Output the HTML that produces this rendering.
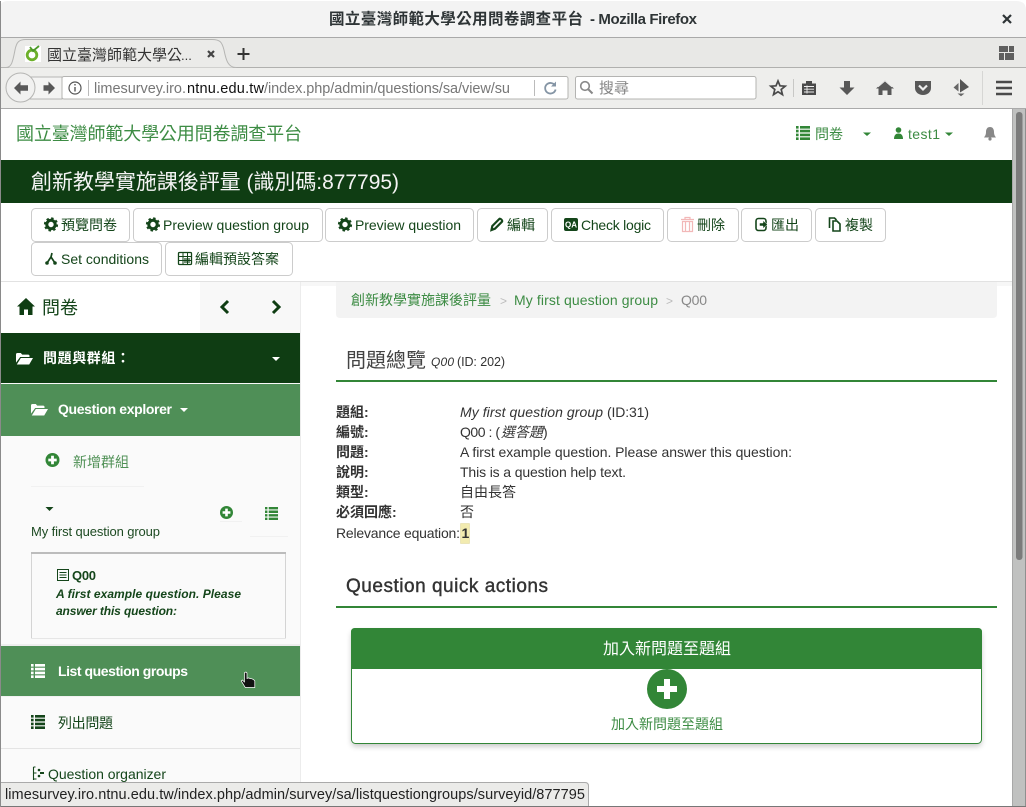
<!DOCTYPE html>
<html lang="zh-Hant"><head><meta charset="utf-8"><title>國立臺灣師範大學公用問卷調查平台</title>
<style>
html,body{margin:0;padding:0;width:1026px;height:807px;overflow:hidden;background:#fff}
svg{display:block}
text{font-family:"Liberation Sans","WenQuanYi Zen Hei","Noto Sans CJK TC",sans-serif;white-space:pre}
.b{font-size:14px;fill:#14451a}
.d{font-size:14px;fill:#333}
.w{fill:#fff;font-weight:700;font-size:14px}
.l{font-weight:700;font-size:14px;fill:#333}
.g{font-size:14px;fill:#3d8c44}
.btn{fill:#fff;stroke:#ccc}
.tb{fill:#555}
</style></head><body>
<svg xmlns="http://www.w3.org/2000/svg" width="1026" height="807" viewBox="0 0 1026 807">
<defs>
<g id="gear"><circle r="4.2" fill="none" stroke="#14451a" stroke-width="3"/><circle r="6" fill="none" stroke="#14451a" stroke-width="2.2" stroke-dasharray="2.4 2.3"/></g>
<g id="list"><path d="M0 0h2.6v2.6H0zM4 0h10v2.6H4zM0 3.8h2.6v2.6H0zM4 3.8h10v2.6H4zM0 7.6h2.6v2.6H0zM4 7.6h10v2.6H4zM0 11.4h2.6v2.6H0zM4 11.4h10v2.6H4z"/></g>
<g id="folder"><path d="M0 3.5C0 2.5.6 2 1.4 2h3.4l1.4 1.6h6c.8 0 1.3.5 1.3 1.2V6H4.2L0 11.6zM4.8 7H17l-3.8 6.5H.8z"/></g>
<g id="pc"><circle r="7" fill="currentColor"/><path d="M-1.4-4.2h2.8v2.8h2.8v2.8H1.400v2.800h-2.800V1.400h-2.800v-2.800h2.800z" fill="#fff"/></g>
</defs>

<!-- title bar -->
<rect width="1026" height="807" fill="#fff"/>
<path d="M0 37V8Q0 1 8 1H1016Q1026 1 1026 10V37z" fill="#f3f3f3"/>
<rect y="37" width="1026" height="1" fill="#a9a9a9"/>
<text x="329" y="24" font-size="15.500" font-weight="700" fill="#2e3436" textLength="254">國立臺灣師範大學公用問卷調查平台</text>
<text x="590" y="24" font-size="15" font-weight="700" fill="#2e3436" textLength="107">- Mozilla Firefox</text>
<path d="M1003 15l8 8M1011 15l-8 8" stroke="#2e3436" stroke-width="2.200"/>

<!-- tab bar -->
<rect y="38" width="1026" height="30" fill="#e8e8e6"/>
<rect y="67" width="1026" height="1" fill="#b0b0ae"/>
<path d="M0 67.500H6C12 67.500 13 60 15 50 16.500 42 19 39.500 26 39.500H212C220 39.500 222 42 224 50 226 60 228 67.500 236 67.500V68H0z" fill="#ebebe9" stroke="#b5b5b3"/>
<rect x="25" y="46" width="16" height="16" fill="#fff"/>
<circle cx="32" cy="55" r="4.800" fill="none" stroke="#6db02a" stroke-width="2.800"/>
<path d="M30 47l3 4 6-5" fill="none" stroke="#4c9a2a" stroke-width="1.800"/>
<text x="47" y="60" font-size="15" fill="#333" textLength="135">國立臺灣師範大學公</text>
<text x="181" y="60" font-size="13" fill="#333">...</text>
<path d="M208 51l6 6M214 51l-6 6" stroke="#444" stroke-width="2.200"/>
<path d="M243.500 48v12M237.500 54h12" stroke="#333" stroke-width="2"/>
<path d="M999 46h9v6h-9zM1009 46h5v6h-5zM999 53h5v7h-5zM1005 53h9v7h-9z" fill="#5f5f5f"/>

<!-- nav bar -->
<rect y="68" width="1026" height="40" fill="#eeeeec"/>
<rect y="108" width="1026" height="1" fill="#aaa"/>
<path d="M30 77H62V99H30z" fill="#f4f4f3" stroke="#b6b6b4"/>
<circle cx="20.500" cy="87.500" r="14.500" fill="#f1f1f0" stroke="#b4b4b2"/>
<path d="M14 88l6.500-6.500v3.800h7.500v5.400h-7.500v3.800z" fill="#585858"/>
<path d="M55 88l-6.500-6.500v3.800h-5v5.400h5v3.800z" fill="#585858"/>
<rect x="62" y="76.500" width="506" height="22.500" rx="2" fill="#fff" stroke="#b4b4b2"/>
<circle cx="75" cy="88" r="6" fill="none" stroke="#555" stroke-width="1.200"/>
<path d="M75 87v4.500M75 84v1.500" stroke="#555" stroke-width="1.400"/>
<rect x="88" y="80" width="1" height="16" fill="#bbb"/>
<svg x="94" y="76" width="416" height="24"><text x="0" y="17" font-size="14.500" fill="#777" textLength="92">limesurvey.iro.</text><text x="93" y="17" font-size="14.500" fill="#111" textLength="77">ntnu.edu.tw</text><text x="170" y="17" font-size="14.500" fill="#777" textLength="246">/index.php/admin/questions/sa/view/su</text></svg>
<rect x="534" y="80" width="1" height="16" fill="#bbb"/>
<path d="M555 85.500a5.300 5.300 0 1 0 .6 4" fill="none" stroke="#8595a5" stroke-width="1.800"/><path d="M556 81.500v5h-5z" fill="#8595a5"/>
<rect x="575.500" y="76.500" width="180.500" height="22.500" rx="2" fill="#fff" stroke="#b4b4b2"/>
<circle cx="585" cy="86" r="4.300" fill="none" stroke="#888" stroke-width="1.600"/><path d="M588 89l4.500 4.500" stroke="#888" stroke-width="2"/>
<text x="599" y="93" font-size="15" fill="#858585">搜尋</text>
<path d="M778 81l2 4.800 5.200.4-4 3.300 1.300 5.100-4.500-2.800-4.500 2.800 1.300-5.100-4-3.300 5.200-.4z" fill="none" stroke="#4a4a4a" stroke-width="1.700"/>
<rect x="793" y="79" width="1" height="18" fill="#c8c8c6"/>
<path d="M802 83.500h4v-2.500h6v2.500h4v11.500h-14z" fill="#4a4a4a"/><path d="M804 86.500h10M804 89.200h10M804 92h10M807 85.500v8" stroke="#eee" stroke-width=".9"/>
<path d="M844 81h6v6.500h4.500l-7.500 7.500-7.500-7.500h4.500z" fill="#585858"/>
<path d="M885 80.500l9 8h-2.500v6.500h-4v-4.500h-5v4.500h-4v-6.500h-2.500z" fill="#585858"/><path d="M878 87l7-6 7 6" fill="none" stroke="#eee" stroke-width=".8"/>
<path d="M915 81h16v7c0 4.200-3.700 7-8 7s-8-2.800-8-7z" fill="#585858"/><path d="M919 85.500l4 4 4-4" fill="none" stroke="#eee" stroke-width="2.200"/>
<path d="M960 79l9 8-9 5.500z" fill="#555"/><path d="M958.500 83l-5 4.500 5 4zM957.500 93.500h7l-3.500 2.800z" fill="#666"/>
<rect x="982" y="71" width="1" height="34" fill="#d6d6d4"/>
<path d="M996 82h16M996 88h16M996 94h16" stroke="#4a4a4a" stroke-width="2.600"/>

<!-- top navbar -->
<rect x="1" y="109" width="1011" height="51" fill="#fff"/>
<text x="16" y="140" font-size="18" fill="#3d8c44" textLength="286">國立臺灣師範大學公用問卷調查平台</text>
<use href="#list" transform="translate(796 126)" fill="#328637"/>
<text x="815" y="139" class="g">問卷</text>
<path d="M863 132.500h8l-4 3.500z" fill="#328637"/>
<circle cx="898.500" cy="130" r="2.800" fill="#328637"/><path d="M894 139c0-4 2-5.500 4.500-5.500s4.500 1.500 4.500 5.500z" fill="#328637"/>
<text x="908" y="139" class="g" textLength="32">test1</text>
<path d="M945 132.500h8l-4 3.500z" fill="#328637"/>
<path d="M990 127c3 0 4 2.500 4 5 0 3 1 4 2 5.500h-12c1-1.500 2-2.500 2-5.500 0-2.500 1-5 4-5z" fill="#888"/><circle cx="990" cy="139" r="1.600" fill="#888"/>

<!-- survey bar -->
<rect x="1" y="160" width="1011" height="43" fill="#0f3d13"/>
<text x="31" y="189" font-size="21" fill="#f4f4f4" textLength="368">創新教學實施課後評量 (識別碼:877795)</text>

<!-- toolbar -->
<rect x="1" y="203" width="1011" height="78" fill="#fff"/>
<g class="btn">
<rect x="31.500" y="208.500" width="98" height="33" rx="4"/>
<rect x="133.500" y="208.500" width="189" height="33" rx="4"/>
<rect x="325.500" y="208.500" width="148" height="33" rx="4"/>
<rect x="477.500" y="208.500" width="70" height="33" rx="4"/>
<rect x="551.500" y="208.500" width="112" height="33" rx="4"/>
<rect x="667.500" y="208.500" width="71" height="33" rx="4"/>
<rect x="741.500" y="208.500" width="70" height="33" rx="4"/>
<rect x="815.500" y="208.500" width="70" height="33" rx="4"/>
<rect x="31.500" y="242.500" width="130" height="33" rx="4"/>
<rect x="165.500" y="242.500" width="127" height="33" rx="4"/>
</g>
<use href="#gear" x="51" y="224.500"/><text x="61" y="230" class="b" textLength="56">預覽問卷</text>
<use href="#gear" x="153" y="224.500"/><text x="163" y="230" class="b" textLength="146">Preview question group</text>
<use href="#gear" x="345" y="224.500"/><text x="355" y="230" class="b" textLength="106">Preview question</text>
<path d="M491.500 230l.8-4 7-7c1-1 3.700 1.700 2.700 2.700l-7 7z" fill="none" stroke="#14451a" stroke-width="2.200"/><text x="507" y="230" class="b" textLength="28">編輯</text>
<rect x="564" y="218" width="14" height="13" rx="2" fill="#14451a"/><text x="565" y="227.500" font-size="8" font-weight="700" fill="#fff" textLength="12">QA</text><text x="581" y="230" class="b" textLength="70">Check logic</text>
<path d="M681 219.500h13M685 219v-1.500h5v1.500M682.500 221.500h10v10h-10zM685.500 222v9M689.500 222v9" fill="none" stroke="#f2b8b8" stroke-width="1.200"/><text x="697" y="230" class="b" textLength="28">刪除</text>
<rect x="756" y="218.500" width="10" height="12" rx="2.500" fill="none" stroke="#14451a" stroke-width="1.600"/><path d="M759.500 223h3.500v-2.500l4.500 4-4.500 4V226h-3.500z" fill="#14451a" stroke="#fff" stroke-width=".5"/><text x="771" y="230" class="b" textLength="28">匯出</text>
<path d="M829.500 228v-10h5l2 2M833 221h4l3 3v7h-7z" fill="none" stroke="#14451a" stroke-width="1.600"/><text x="845" y="230" class="b" textLength="28">複製</text>
<path d="M47 263l4-6M51 257l4 6M52 253l-1 4" fill="none" stroke="#14451a" stroke-width="1.700"/><circle cx="47" cy="263" r="1.800" fill="#14451a"/><circle cx="55" cy="263" r="1.800" fill="#14451a"/><text x="61" y="264" class="b" textLength="88">Set conditions</text>
<rect x="178.500" y="252.500" width="13" height="12" rx="1" fill="none" stroke="#14451a" stroke-width="1.300"/><path d="M178.500 256.500h13M178.500 260.500h13M183 252.500v12M187.500 252.500v12" stroke="#14451a"/><rect x="184" y="258" width="6" height="5" fill="#14451a" opacity=".6"/><text x="195" y="264" class="b" textLength="84">編輯預設答案</text>
<rect x="1" y="281" width="1011" height="1" fill="#e2e2e2"/>
<rect x="301" y="282" width="711" height="4" fill="#f7f7f7"/>

<!-- sidebar -->
<rect x="1" y="282" width="299" height="525" fill="#fafafa"/>
<rect x="300" y="282" width="1" height="525" fill="#ececec"/>
<rect x="1" y="282" width="199" height="51" fill="#fff"/>
<rect x="200" y="282" width="100" height="51" fill="#f8f8f8"/>
<path d="M26 298l9 8.500h-2.500v8.500h-4.500v-5.500h-4v5.500h-4.500v-8.500H17z" fill="#0f3d13"/>
<text x="42" y="314" font-size="18" fill="#14451a" textLength="36">問卷</text>
<path d="M228 301l-6 6 6 6" fill="none" stroke="#0f3d13" stroke-width="3"/>
<path d="M273 301l6 6-6 6" fill="none" stroke="#0f3d13" stroke-width="3"/>
<rect x="1" y="333" width="299" height="50" fill="#0f3d13"/>
<use href="#folder" transform="translate(16 351)" fill="#fff"/>
<text x="43" y="363" class="w" textLength="87">問題與群組：</text>
<path d="M272 357h8l-4 4z" fill="#fff"/>
<rect x="1" y="384" width="299" height="52" fill="#4f8f57"/>
<use href="#folder" transform="translate(31 402)" fill="#fff"/>
<text x="58" y="414" class="w" textLength="114">Question explorer</text>
<path d="M180 408h8l-4 4z" fill="#fff"/>
<use href="#pc" transform="translate(52.500 460)" color="#328637"/>
<text x="73" y="467" font-size="14" fill="#4f9055" textLength="56">新增群組</text>
<rect x="31" y="486" width="113" height="1" fill="#f1f1f1"/>
<path d="M45.500 507h8l-4 4z" fill="#14451a"/>
<use href="#pc" transform="translate(226.500 512.500) scale(.93)" color="#328637"/>
<rect x="220" y="521" width="22" height="1" fill="#f1f1f1"/>
<use href="#list" transform="translate(265 507) scale(.93)" fill="#328637"/>
<rect x="250" y="536" width="38" height="1" fill="#f1f1f1"/>
<text x="31" y="536" font-size="13" fill="#1d4a22" textLength="129">My first question group</text>
<path d="M31.500 638.500V552.500H285.500V638.500" fill="#fafafa" stroke="#d4d4d4"/>
<rect x="32" y="638" width="253" height="1" fill="#e6e6e6"/>
<rect x="31" y="552" width="255" height="2" fill="#bcbcbc"/>
<rect x="57.500" y="569.500" width="11" height="11" fill="none" stroke="#14451a"/><path d="M59.500 572.500h7M59.500 575h7M59.500 577.500h7" stroke="#14451a" stroke-width=".9"/>
<text x="72" y="580" font-size="13" font-weight="700" fill="#14451a" textLength="24">Q00</text>
<text x="56" y="598" font-size="12" font-weight="700" font-style="italic" fill="#14451a" textLength="185">A first example question. Please</text>
<text x="56" y="615" font-size="12" font-weight="700" font-style="italic" fill="#14451a" textLength="121">answer this question:</text>
<rect x="1" y="644" width="299" height="2" fill="#eee"/>
<rect x="1" y="646" width="299" height="50" fill="#4f8f57"/>
<use href="#list" transform="translate(31 664)" fill="#fff"/>
<text x="58" y="676" class="w" textLength="130">List question groups</text>
<rect x="1" y="696" width="299" height="1" fill="#f1f1f1"/>
<use href="#list" transform="translate(31 715)" fill="#14451a"/>
<text x="58" y="728" class="b" textLength="55">列出問題</text>
<rect x="1" y="748" width="299" height="1" fill="#e4e4e4"/>
<path d="M33.500 767v13M33.500 767h2M33.500 773h3M33.500 779h3" fill="none" stroke="#14451a" stroke-width="1.100"/><circle cx="39" cy="770" r="1.300" fill="#14451a"/><circle cx="39" cy="776" r="1.300" fill="#14451a"/><path d="M40 773h4" stroke="#14451a" stroke-width="2"/>
<text x="48" y="779" class="b" textLength="118">Question organizer</text>
<!-- cursor -->
<path d="M244.500 673.500c0-1.800 2.500-1.800 2.500 0v5l1.500-.6 1.800.7 1.700.2 1.800 1 1 1.200v6.500h-9.500l-4-6.500 1-1 2.200 2z" fill="#111" stroke="#fff" stroke-width=".7"/>

<!-- main -->
<path d="M336 282H997V314Q997 318 993 318H340Q336 318 336 314z" fill="#f3f3f3"/>
<text x="351" y="305" class="g" textLength="140">創新教學實施課後評量</text>
<text x="500" y="305" font-size="12" fill="#bbb">&gt;</text>
<text x="514" y="305" class="g" textLength="144">My first question group</text>
<text x="666" y="305" font-size="12" fill="#bbb">&gt;</text>
<text x="681" y="305" font-size="14" fill="#888" textLength="26">Q00</text>

<text x="346" y="367" font-size="20" fill="#444" textLength="80">問題總覽</text>
<text x="431" y="366" font-size="12" font-style="italic" fill="#333" textLength="23">Q00</text>
<text x="457" y="366" font-size="12.500" fill="#333" textLength="48">(ID: 202)</text>
<rect x="336" y="380" width="661" height="2" fill="#328637"/>

<text x="336" y="417" class="l">題組:</text>
<text x="336" y="437" class="l">編號:</text>
<text x="336" y="457" class="l">問題:</text>
<text x="336" y="477" class="l">說明:</text>
<text x="336" y="497" class="l">類型:</text>
<text x="336" y="517" class="l">必須回應:</text>
<text x="336" y="538" class="d" textLength="124">Relevance equation:</text>
<text x="460" y="417" class="d" font-style="italic" textLength="143">My first question group</text>
<text x="607" y="417" class="d" textLength="42">(ID:31)</text>
<text x="460" y="437" class="d" textLength="40">Q00 : (</text>
<text x="501" y="437" class="d" font-style="italic" textLength="42">選答題</text>
<text x="543" y="437" class="d">)</text>
<text x="460" y="457" class="d" textLength="332">A first example question. Please answer this question:</text>
<text x="460" y="477" class="d" textLength="166">This is a question help text.</text>
<text x="460" y="497" class="d" textLength="56">自由長答</text>
<text x="460" y="517" class="d">否</text>
<rect x="460.500" y="523.500" width="9" height="20" fill="#f2ebb0" stroke="#ddd59a" stroke-dasharray="1 1"/>
<text x="461.500" y="538" class="l">1</text>

<text x="346" y="592" font-size="19" fill="#333" stroke="#333" stroke-width=".4" textLength="202">Question quick actions</text>
<rect x="336" y="606" width="661" height="2" fill="#328637"/>

<rect x="351.500" y="628.500" width="630" height="115" rx="4" fill="#000" opacity=".22" transform="translate(0 3)" style="filter:blur(3px)"/>
<rect x="351.500" y="628.500" width="630" height="115" rx="4" fill="#fff" stroke="#328637"/>
<path d="M351 669V632Q351 628 355 628H978Q982 628 982 632V669z" fill="#328637"/>
<text x="603" y="654" font-size="16" fill="#fff">加入新問題至題組</text>
<circle cx="667" cy="689" r="20" fill="#328637"/>
<path d="M664 679h6v7h7v6h-7v7h-6v-7h-7v-6h7z" fill="#fff"/>
<text x="611" y="729" class="g" fill="#328637" textLength="112">加入新問題至題組</text>

<!-- scrollbar -->
<rect x="1012" y="109" width="14" height="698" fill="#c0c1c0"/>
<rect x="1012" y="109" width="1" height="698" fill="#a8a8a8"/>
<rect x="1025" y="109" width="1" height="698" fill="#8f8f8f"/>
<rect x="1016" y="112" width="6.500" height="448" rx="3" fill="#7b7b7b"/>

<!-- status -->
<path d="M0 807V782H585Q589 782 589 786V807z" fill="#ebebe9"/>
<path d="M0 782.500H585Q588.500 782.500 588.500 786V807" fill="none" stroke="#aaa"/>
<text x="5" y="799" font-size="14.500" fill="#222" textLength="580">limesurvey.iro.ntnu.edu.tw/index.php/admin/survey/sa/listquestiongroups/surveyid/877795</text>
<rect y="806" width="1026" height="1" fill="#777"/>
<rect x="0" y="1" width="1" height="806" fill="#8a8a8a"/>
</svg>
</body></html>
